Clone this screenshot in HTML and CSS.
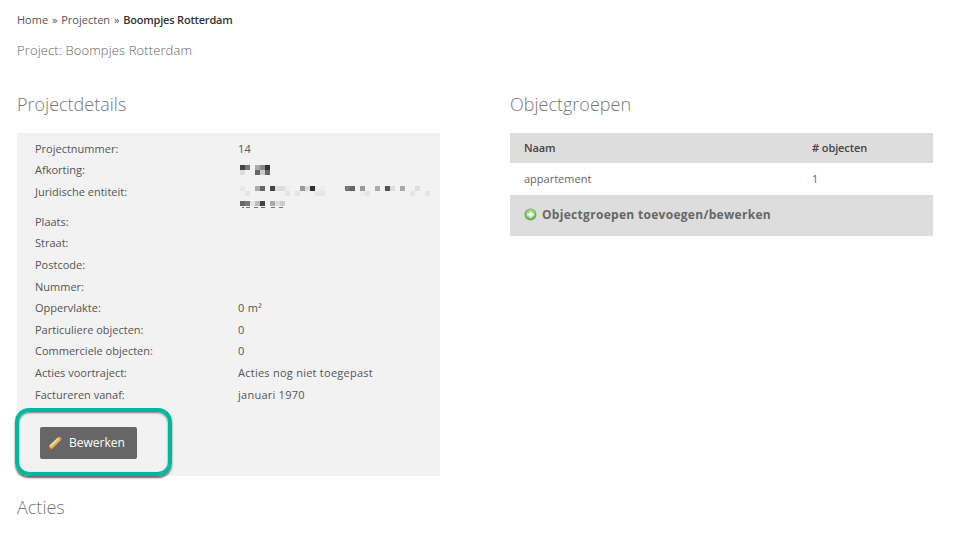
FILE: index.html
```html
<!DOCTYPE html>
<html>
<head>
<meta charset="utf-8">
<title>Boompjes Rotterdam</title>
<link rel="stylesheet" href="styles.css">
</head>

<body>

<div id="container">
    <div class="breadcrumb">Home &raquo; Projecten &raquo; <strong>Boompjes Rotterdam</strong></div>
    <div class="page_title">Project: Boompjes Rotterdam</div>

    <div id="columns">
        <div class="column">
            <h2>Projectdetails</h2>
            <div class="details">
                <div class="row"><div class="label">Projectnummer:</div><div class="value">14</div></div>
                <div class="row">
                    <div class="label">Afkorting:</div>
                    <div class="value">
                        <svg class="blur blur_short" width="35" height="10" viewBox="240 164 35 10">
                            <rect x="240" y="164" width="5" height="5" fill="#444"/>
                            <rect x="245" y="164" width="5" height="5" fill="#777"/>
                            <rect x="255" y="164" width="5" height="5" fill="#aaa"/>
                            <rect x="260" y="164" width="5" height="5" fill="#888"/>
                            <rect x="265" y="164" width="5" height="5" fill="#333"/>
                            <rect x="240" y="169" width="5" height="5" fill="#ddd"/>
                            <rect x="255" y="169" width="5" height="5" fill="#666"/>
                            <rect x="260" y="169" width="5" height="5" fill="#ccc"/>
                            <rect x="265" y="169" width="5" height="5" fill="#666"/>
                        </svg>
                    </div>
                </div>
                <div class="row row_tall">
                    <div class="label">Juridische entiteit:</div>
                    <div class="value">
                        <svg class="blur blur_long" width="192" height="23" viewBox="240 189 192 23">
                            <rect x="240" y="189" width="5" height="5" fill="#e8e8e8"/>
                            <rect x="255" y="189" width="5" height="5" fill="#aaa"/>
                            <rect x="260" y="189" width="5" height="5" fill="#666"/>
                            <rect x="270" y="189" width="5" height="5" fill="#444"/>
                            <rect x="275" y="189" width="5" height="5" fill="#ddd"/>
                            <rect x="280" y="189" width="5" height="5" fill="#ddd"/>
                            <rect x="285" y="189" width="5" height="5" fill="#eee"/>
                            <rect x="300" y="189" width="5" height="5" fill="#999"/>
                            <rect x="305" y="189" width="5" height="5" fill="#ddd"/>
                            <rect x="310" y="189" width="5" height="5" fill="#333"/>
                            <rect x="320" y="189" width="5" height="5" fill="#eee"/>
                            <rect x="345" y="189" width="5" height="5" fill="#777"/>
                            <rect x="350" y="189" width="5" height="5" fill="#666"/>
                            <rect x="360" y="189" width="5" height="5" fill="#999"/>
                            <rect x="375" y="189" width="5" height="5" fill="#aaa"/>
                            <rect x="385" y="189" width="5" height="5" fill="#555"/>
                            <rect x="390" y="189" width="5" height="5" fill="#ddd"/>
                            <rect x="400" y="189" width="5" height="5" fill="#aaa"/>
                            <rect x="415" y="189" width="5" height="5" fill="#ddd"/>
                            <rect x="245" y="194" width="5" height="5" fill="#e5e5e5"/>
                            <rect x="285" y="194" width="5" height="5" fill="#e5e5e5"/>
                            <rect x="295" y="194" width="5" height="5" fill="#e5e5e5"/>
                            <rect x="315" y="194" width="10" height="5" fill="#e5e5e5"/>
                            <rect x="360" y="194" width="5" height="5" fill="#eee"/>
                            <rect x="365" y="194" width="5" height="5" fill="#e5e5e5"/>
                            <rect x="410" y="194" width="5" height="5" fill="#e5e5e5"/>
                            <rect x="425" y="194" width="5" height="5" fill="#e5e5e5"/>
                            <rect x="240" y="204" width="5" height="5" fill="#666"/>
                            <rect x="245" y="204" width="5" height="5" fill="#777"/>
                            <rect x="250" y="204" width="5" height="5" fill="#e5e5e5"/>
                            <rect x="255" y="204" width="5" height="5" fill="#bbb"/>
                            <rect x="260" y="204" width="5" height="5" fill="#444"/>
                            <rect x="270" y="204" width="5" height="5" fill="#aaa"/>
                            <rect x="275" y="204" width="5" height="5" fill="#ddd"/>
                            <rect x="280" y="204" width="5" height="5" fill="#ccc"/>
                            <rect x="242" y="210" width="2" height="1" fill="#666"/>
                            <rect x="246" y="210" width="4" height="1" fill="#777"/>
                            <rect x="254" y="210" width="4" height="1" fill="#777"/>
                            <rect x="261" y="210" width="4" height="1" fill="#666"/>
                            <rect x="271" y="210" width="4" height="1" fill="#777"/>
                            <rect x="279" y="210" width="4" height="1" fill="#777"/>
                        </svg>
                    </div>
                </div>
                <div class="row"><div class="label">Plaats:</div><div class="value"></div></div>
                <div class="row"><div class="label">Straat:</div><div class="value"></div></div>
                <div class="row"><div class="label">Postcode:</div><div class="value"></div></div>
                <div class="row"><div class="label">Nummer:</div><div class="value"></div></div>
                <div class="row"><div class="label">Oppervlakte:</div><div class="value">0 m²</div></div>
                <div class="row"><div class="label">Particuliere objecten:</div><div class="value">0</div></div>
                <div class="row"><div class="label">Commerciele objecten:</div><div class="value">0</div></div>
                <div class="row"><div class="label">Acties voortraject:</div><div class="value">Acties nog niet toegepast</div></div>
                <div class="row"><div class="label">Factureren vanaf:</div><div class="value">januari 1970</div></div>
                <a class="edit_button">
                    <svg width="14" height="14" viewBox="0 0 14 14">
                        <path d="M0.5 13.5 L1.5 9.5 L10 1.5 L13 4 L4.5 12.5 Z" fill="#e8b04a"/>
                        <path d="M1.5 9.5 L10 1.5 L11.3 2.6 L3 10.8 Z" fill="#f8e0a0"/>
                        <path d="M10 1.5 L11.4 0.4 L13.8 2.6 L13 4 Z" fill="#e59a58"/>
                        <path d="M0.5 13.5 L1 11 L3 12.9 Z" fill="#7a5c34"/>
                    </svg>
                    Bewerken
                </a>
                <div class="highlight"></div>
            </div>
            <h2 class="actions_title">Acties</h2>
        </div>

        <div class="column">
            <h2>Objectgroepen</h2>
            <div class="group_head">
                <div class="group_name">Naam</div>
                <div>&#35; objecten</div>
            </div>
            <div class="group_row">
                <div class="group_name">appartement</div>
                <div>1</div>
            </div>
            <a class="group_add">
                <svg width="13" height="13" viewBox="0 0 13 13">
                    <circle cx="6.5" cy="6.5" r="6" fill="#6fae4e"/>
                    <circle cx="6.5" cy="5.8" r="4.6" fill="#9ed47e"/>
                    <path d="M5.6 3.4 H7.4 V5.6 H9.6 V7.4 H7.4 V9.6 H5.6 V7.4 H3.4 V5.6 H5.6 Z" fill="#fff"/>
                </svg>
                Objectgroepen toevoegen/bewerken
            </a>
        </div>
    </div>
</div>

</body>
</html>
```

FILE: styles.css
```css
body,div,h2 {
    margin: 0;
    padding: 0;
}
body {
    background: #fff;
    color: #555;
    font: 11px/21.6px "Open Sans",sans-serif;
    overflow: hidden;
}
#container {
    padding: 10px 29px 0 17px;
}
.breadcrumb {
    color: #555;
    line-height: 20px;
    word-spacing: 1px;
}
.breadcrumb strong {
    color: #333;
    font-weight: 600;
    letter-spacing: -0.2px;
    word-spacing: 0;
}
.page_title {
    color: #666;
    font-size: 13px;
    font-weight: 300;
    letter-spacing: 0.12px;
    line-height: 20px;
    margin: 10px 0 0 0;
}
#columns {
    display: flex;
    gap: 70px;
    margin: 32px 0 0 0;
}
.column {
    width: 423px;
}
h2 {
    color: #777;
    font-size: 18px;
    font-weight: 300;
    line-height: 24px;
    margin: 0 0 17px 0;
}
.details {
    background: #f2f2f2;
    height: 327.4px;
    padding: 4.6px 0 11px 18px;
    position: relative;
}
.row {
    display: flex;
}
.row_tall {
    height: 30px;
}
.label {
    width: 203px;
    flex: none;
}
.value {
    flex: 1;
    letter-spacing: 0.25px;
    min-height: 21.6px;
}
.blur {
    display: block;
    margin: 0 0 0 2px;
}
.blur_short {
    padding: 6px 0 0 0;
}
.blur_long {
    padding: 5px 0 0 0;
}
.edit_button {
    align-items: center;
    background: #666;
    border-radius: 2px;
    color: #fff;
    display: flex;
    font-size: 12px;
    gap: 7px;
    height: 32px;
    margin: 21.4px 0 0 5px;
    padding: 0 10px 0 8px;
    width: 79px;
}
.highlight {
    border: 4px solid #00b8a0;
    border-radius: 14px;
    bottom: 0;
    box-shadow: 0 2px 2px 0 rgba(0,0,0,0.6), inset 0 1px 2px 0 rgba(0,0,0,0.5);
    height: 60px;
    left: -2px;
    position: absolute;
    width: 149px;
}
.actions_title {
    margin: 19px 0 0 0;
}
.group_head {
    background: #ddd;
    color: #444;
    display: flex;
    font-weight: 600;
    height: 30px;
    letter-spacing: -0.1px;
    line-height: 30px;
    margin: 0 0 1px 0;
    padding: 0 0 0 14px;
}
.group_name {
    width: 288px;
}
.group_row {
    color: #666;
    display: flex;
    height: 31px;
    line-height: 29px;
    padding: 0 0 0 14px;
}
.group_add {
    align-items: center;
    background: #ddd;
    color: #666;
    display: flex;
    font-size: 12px;
    font-weight: 700;
    gap: 5px;
    height: 39px;
    letter-spacing: 0.3px;
    padding: 0 0 2px 14px;
}
```
